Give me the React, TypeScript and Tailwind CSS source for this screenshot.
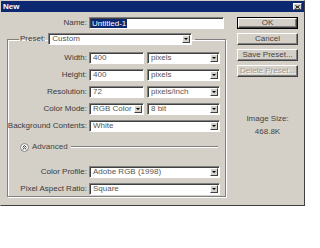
import React from "react";

const font = { fontFamily: '"Liberation Sans", Arial, sans-serif' };

function Arrow() {
  return (
    <span className="flex h-[8px] w-[8px] items-center justify-center border border-t-white border-l-white border-b-[#404040] border-r-[#404040] bg-[#d4d0c8]">
      <svg width="4" height="2" viewBox="0 0 4 2">
        <path d="M0 0h4L2 2z" fill="#000" />
      </svg>
    </span>
  );
}

function Field({ w, value, select }: { w: string; value: string; select?: boolean }) {
  return (
    <div
      className={`${w} flex h-[12px] items-center justify-between border border-t-[#808080] border-l-[#808080] border-b-white border-r-white bg-white pl-[3px] pr-[1px] text-[8px] leading-none text-[#555] shadow-[inset_1px_1px_0_#404040]`}
    >
      <span className="whitespace-nowrap">{value}</span>
      {select && <Arrow />}
    </div>
  );
}

function Row({ label, children }: { label: string; children: React.ReactNode }) {
  return (
    <div className="flex h-[12px] items-center">
      <div className="flex w-[81px] shrink-0 justify-end pr-[2px]">
        <span className="whitespace-nowrap text-[8px] leading-none text-[#3a3a3a]">{label}</span>
      </div>
      <div className="flex gap-[3px]">{children}</div>
    </div>
  );
}

function Button({ label, main, disabled }: { label: string; main?: boolean; disabled?: boolean }) {
  return (
    <div className={`h-[12px] w-[61px] ${main ? "border border-black" : ""}`}>
      <div
        className={`flex h-full w-full items-center justify-center border border-t-white border-l-white border-b-[#404040] border-r-[#404040] text-[8px] leading-none shadow-[inset_-1px_-1px_0_#808080] ${
          disabled ? "text-[#9a9a9a] [text-shadow:1px_1px_0_#fff]" : "text-[#444]"
        }`}
      >
        {label}
      </div>
    </div>
  );
}

export default function App() {
  return (
    <div className="h-[248px] w-[320px] bg-white" style={font}>
      <div className="flex h-[206px] w-[305px] flex-col border border-t-[#d4d0c8] border-l-[#d4d0c8] border-b-[#404040] border-r-[#404040] bg-[#d4d0c8]">
        <div className="flex h-[11px] items-center justify-between bg-[#0c2870] pl-[2px] pr-[2px]">
          <span className="text-[8px] font-bold leading-none text-white">New</span>
          <span className="flex h-[7px] w-[9px] items-center justify-center border border-t-white border-l-white border-b-[#404040] border-r-[#404040] bg-[#d4d0c8]">
            <svg width="5" height="4" viewBox="0 0 5 4">
              <path d="M0.5 0.5l4 3M4.5 0.5l-4 3" stroke="#000" strokeWidth="1" />
            </svg>
          </span>
        </div>

        <div className="flex flex-1">
          <div className="w-[225px] pt-[5px]">
            <div className="flex h-[12px] items-center">
              <span className="w-[88px] pr-[2px] text-right text-[8px] leading-none text-[#3a3a3a]">Name:</span>
              <div className="flex h-[12px] w-[135px] items-center border border-t-[#808080] border-l-[#808080] border-b-white border-r-white bg-white pl-[1px] shadow-[inset_1px_1px_0_#404040]">
                <span className="bg-[#0c2870] px-[1px] text-[8px] leading-[9px] text-white">Untitled-1</span>
              </div>
            </div>

            <fieldset className="ml-[6px] mt-[4px] h-[164px] w-[219px] border border-[#808080] shadow-[inset_1px_1px_0_#fff,1px_1px_0_#fff]">
              <legend className="ml-[11px] flex h-[12px] items-center gap-[3px] pl-[1px] pr-[3px]">
                <span className="text-[8px] leading-none text-[#3a3a3a]">Preset:</span>
                <Field w="w-[144px]" value="Custom" select />
              </legend>

              <div className="flex flex-col gap-[5px] pt-[7px]">
                <Row label="Width:">
                  <Field w="w-[55px]" value="400" />
                  <Field w="w-[73px]" value="pixels" select />
                </Row>
                <Row label="Height:">
                  <Field w="w-[55px]" value="400" />
                  <Field w="w-[73px]" value="pixels" select />
                </Row>
                <Row label="Resolution:">
                  <Field w="w-[55px]" value="72" />
                  <Field w="w-[73px]" value="pixels/inch" select />
                </Row>
                <Row label="Color Mode:">
                  <Field w="w-[55px]" value="RGB Color" select />
                  <Field w="w-[73px]" value="8 bit" select />
                </Row>
                <Row label="Background Contents:">
                  <Field w="w-[131px]" value="White" select />
                </Row>
              </div>

              <div className="mt-[10px] flex h-[10px] items-center pl-[12px] pr-[7px]">
                <svg width="9" height="9" viewBox="0 0 9 9">
                  <circle cx="4.5" cy="4.5" r="4" fill="#f4f3ef" stroke="#8a8a8a" strokeWidth="1" />
                  <path d="M2.7 4.3L4.5 2.6L6.3 4.3M2.7 6.5L4.5 4.8L6.3 6.5" fill="none" stroke="#222" strokeWidth="0.9" />
                </svg>
                <span className="ml-[3px] text-[8px] leading-none text-[#444]">Advanced</span>
                <div className="ml-[3px] h-[2px] flex-1 border-t border-b border-t-[#808080] border-b-white" />
              </div>

              <div className="mt-[14px] flex flex-col gap-[5px]">
                <Row label="Color Profile:">
                  <Field w="w-[131px]" value="Adobe RGB (1998)" select />
                </Row>
                <Row label="Pixel Aspect Ratio:">
                  <Field w="w-[131px]" value="Square" select />
                </Row>
              </div>
            </fieldset>
          </div>

          <div className="flex flex-col pl-[11px] pt-[5px]">
            <div className="flex flex-col gap-[4px]">
              <Button label="OK" main />
              <Button label="Cancel" />
              <Button label="Save Preset..." />
              <Button label="Delete Preset..." disabled />
            </div>
            <div className="mt-[38px] flex w-[61px] flex-col items-center gap-[5px] text-[8px] leading-none text-[#444]">
              <span>Image Size:</span>
              <span>468.8K</span>
            </div>
          </div>
        </div>
      </div>
    </div>
  );
}
